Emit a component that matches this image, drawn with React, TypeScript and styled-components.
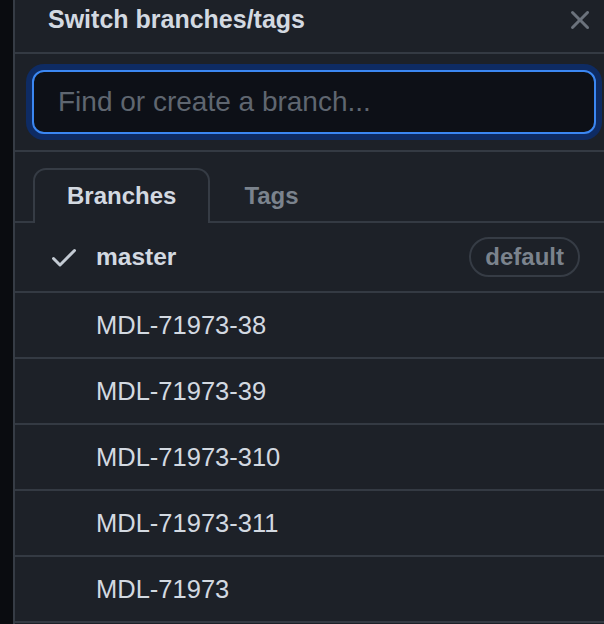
import React from "react";
import styled, { createGlobalStyle } from "styled-components";

const GlobalStyle = createGlobalStyle`
  html, body { margin: 0; padding: 0; background: #0a0c10; }
  body { font-family: "Liberation Sans", Arial, sans-serif; -webkit-font-smoothing: antialiased; }
  * { box-sizing: border-box; }
`;

const Page = styled.div`
  display: flex;
  width: 604px;
  height: 624px;
  overflow: hidden;
  background: #0a0c10;
`;

const Gutter = styled.div`
  width: 13px;
  flex: none;
  background: #0a0c10;
`;

const Panel = styled.div`
  flex: 1;
  display: flex;
  flex-direction: column;
  min-width: 0;
  background: #1d2128;
  border-left: 2px solid #363c45;
`;

const Header = styled.div`
  display: flex;
  align-items: flex-start;
  justify-content: space-between;
  height: 54px;
  padding: 4px 8px 0 33px;
  border-bottom: 2px solid #343a43;
`;

const Title = styled.h1`
  margin: 0;
  font-size: 25px;
  line-height: 30px;
  font-weight: 700;
  color: #d3d9e1;
`;

const CloseButton = styled.button`
  display: flex;
  padding: 0;
  border: none;
  background: transparent;
  color: #6b727c;
  cursor: pointer;
`;

const SearchSection = styled.div`
  padding: 16px 8px 16px 17px;
  border-bottom: 2px solid #343a43;
`;

const SearchInput = styled.input`
  display: block;
  width: 100%;
  height: 64px;
  padding: 0 24px;
  border: 2px solid #3b87f2;
  border-radius: 12px;
  background: #0d1017;
  box-shadow: 0 0 0 6px #0e2b63;
  outline: none;
  font-family: "Liberation Sans", Arial, sans-serif;
  font-size: 28px;
  color: #d3d9e1;
  &::placeholder { color: #5f6670; }
`;

const TabBar = styled.div`
  display: flex;
  padding: 16px 0 0 18px;
  border-bottom: 2px solid #343a43;
`;

const Tab = styled.div<{ $active?: boolean }>`
  display: flex;
  align-items: center;
  height: 55px;
  margin-bottom: -2px;
  padding: 0 32px 2px;
  border: 2px solid ${(p) => (p.$active ? "#363c45" : "transparent")};
  border-bottom: none;
  border-radius: 13px 13px 0 0;
  background: ${(p) => (p.$active ? "#1d2128" : "transparent")};
  font-size: 24px;
  font-weight: 700;
  color: ${(p) => (p.$active ? "#d3d9e1" : "#7b838d")};
`;

const List = styled.div`
  display: flex;
  flex-direction: column;
`;

const Row = styled.div<{ $tall?: boolean }>`
  display: flex;
  align-items: center;
  gap: 16px;
  height: ${(p) => (p.$tall ? 70 : 66)}px;
  padding: 0 24px 0 33px;
  border-bottom: 2px solid #343a43;
`;

const CheckSlot = styled.span`
  display: flex;
  width: 32px;
  flex: none;
  color: #c3cad3;
`;

const BranchName = styled.span<{ $current?: boolean }>`
  flex: 1;
  font-size: ${(p) => (p.$current ? 24.5 : 25.5)}px;
  font-weight: ${(p) => (p.$current ? 700 : 400)};
  color: #d3d9e1;
  white-space: nowrap;
`;

const Pill = styled.span`
  display: flex;
  align-items: center;
  height: 40px;
  padding: 0 14px;
  border: 2px solid #363c45;
  border-radius: 20px;
  font-size: 24px;
  font-weight: 700;
  color: #7b838d;
`;

const CheckIcon = () => (
  <svg width="32" height="32" viewBox="0 0 16 16" fill="currentColor">
    <path d="M13.78 4.22a.75.75 0 0 1 0 1.06l-7.25 7.25a.75.75 0 0 1-1.06 0L2.22 9.28a.751.751 0 0 1 .018-1.042.751.751 0 0 1 1.042-.018L6 10.94l6.72-6.72a.75.75 0 0 1 1.06 0Z" />
  </svg>
);

const XIcon = () => (
  <svg width="32" height="32" viewBox="0 0 16 16" fill="currentColor">
    <path d="M3.72 3.72a.75.75 0 0 1 1.06 0L8 6.94l3.22-3.22a.749.749 0 0 1 1.275.326.749.749 0 0 1-.215.734L9.06 8l3.22 3.22a.749.749 0 0 1-.326 1.275.749.749 0 0 1-.734-.215L8 9.06l-3.22 3.22a.751.751 0 0 1-1.042-.018.751.751 0 0 1-.018-1.042L6.94 8 3.72 4.78a.75.75 0 0 1 0-1.06Z" />
  </svg>
);

const branches = [
  "MDL-71973-38",
  "MDL-71973-39",
  "MDL-71973-310",
  "MDL-71973-311",
  "MDL-71973",
];

export default function App() {
  return (
    <>
      <GlobalStyle />
      <Page>
        <Gutter />
        <Panel>
          <Header>
            <Title>Switch branches/tags</Title>
            <CloseButton aria-label="Close">
              <XIcon />
            </CloseButton>
          </Header>
          <SearchSection>
            <SearchInput placeholder="Find or create a branch..." />
          </SearchSection>
          <TabBar>
            <Tab $active>Branches</Tab>
            <Tab>Tags</Tab>
          </TabBar>
          <List>
            <Row $tall>
              <CheckSlot>
                <CheckIcon />
              </CheckSlot>
              <BranchName $current>master</BranchName>
              <Pill>default</Pill>
            </Row>
            {branches.map((b) => (
              <Row key={b}>
                <CheckSlot />
                <BranchName>{b}</BranchName>
              </Row>
            ))}
          </List>
        </Panel>
      </Page>
    </>
  );
}
